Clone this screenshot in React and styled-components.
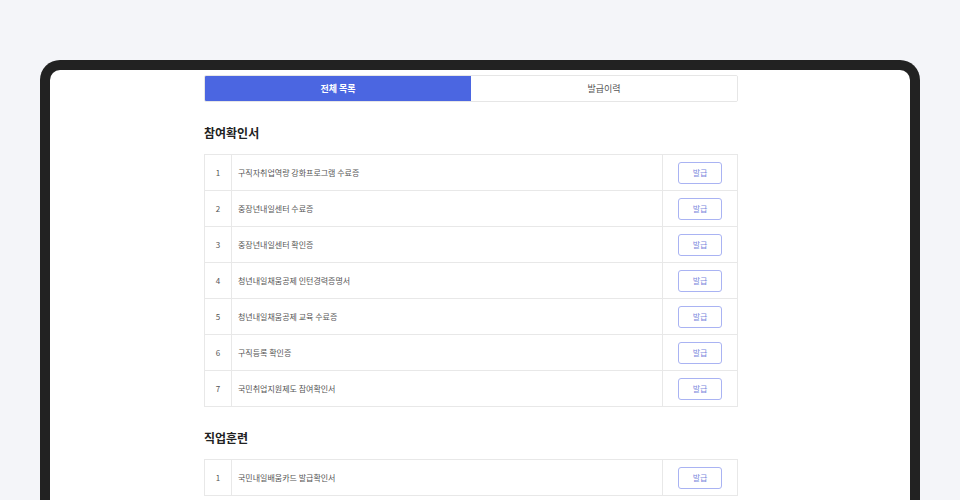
import React from 'react'
import styled, { createGlobalStyle } from 'styled-components'

const GlobalStyle = createGlobalStyle`
  html, body {
    margin: 0;
    padding: 0;
    background: #f4f5f9;
    font-family: "Noto Sans CJK KR", "Noto Sans", sans-serif;
    overflow: hidden;
  }
`

const Page = styled.div`
  width: 960px;
  height: 500px;
  padding: 60px 40px 0;
  box-sizing: border-box;
  overflow: hidden;
`

const Device = styled.div`
  height: 600px;
  border: 10px solid #222222;
  border-bottom: none;
  border-radius: 20px 20px 0 0;
  background: #ffffff;
  box-sizing: border-box;
  padding: 5px 0 0 154px;
`

const Content = styled.div`
  width: 534px;
`

const Tabs = styled.div`
  display: flex;
  height: 27px;
  border: 1px solid #e6e6e6;
  border-radius: 2px;
  box-sizing: border-box;
  overflow: hidden;
`

const Tab = styled.div`
  flex: 1;
  display: flex;
  align-items: center;
  justify-content: center;
  font-size: 9px;
  font-weight: ${p => (p.$active ? 700 : 400)};
  color: ${p => (p.$active ? '#ffffff' : '#555555')};
  background: ${p => (p.$active ? '#4b66e1' : '#ffffff')};
`

const Heading = styled.h3`
  margin: 23px 0 13px;
  font-size: 12px;
  line-height: 16px;
  font-weight: 700;
  color: #222222;
`

const Table = styled.div`
  border: 1px solid #e8e8e8;
  border-bottom: none;
`

const Row = styled.div`
  display: grid;
  grid-template-columns: 27px 1fr 74px;
  height: 36px;
  border-bottom: 1px solid #e8e8e8;
  box-sizing: border-box;
`

const Num = styled.div`
  display: flex;
  align-items: center;
  justify-content: center;
  border-right: 1px solid #e8e8e8;
  font-size: 8px;
  color: #555555;
`

const Name = styled.div`
  display: flex;
  align-items: center;
  padding-left: 6px;
  font-size: 8px;
  color: #555555;
  border-right: 1px solid #e8e8e8;
`

const Action = styled.div`
  display: flex;
  align-items: center;
  justify-content: center;
`

const IssueButton = styled.button`
  width: 44px;
  height: 22px;
  padding: 0;
  border: 1px solid #a9b3f3;
  border-radius: 3px;
  background: #ffffff;
  color: #7b88dd;
  font-family: inherit;
  font-size: 8px;
  cursor: pointer;
`

const participation = [
  '구직자취업역량 강화프로그램 수료증',
  '중장년내일센터 수료증',
  '중장년내일센터 확인증',
  '청년내일채움공제 인턴경력증명서',
  '청년내일채움공제 교육 수료증',
  '구직등록 확인증',
  '국민취업지원제도 참여확인서',
]

const training = ['국민내일배움카드 발급확인서']

const Section = ({ title, items }) => (
  <>
    <Heading>{title}</Heading>
    <Table>
      {items.map((item, i) => (
        <Row key={item}>
          <Num>{i + 1}</Num>
          <Name>{item}</Name>
          <Action>
            <IssueButton>발급</IssueButton>
          </Action>
        </Row>
      ))}
    </Table>
  </>
)

const App = () => (
  <Page>
    <GlobalStyle />
    <Device>
      <Content>
        <Tabs>
          <Tab $active>전체 목록</Tab>
          <Tab>발급이력</Tab>
        </Tabs>
        <Section title="참여확인서" items={participation} />
        <Section title="직업훈련" items={training} />
      </Content>
    </Device>
  </Page>
)

export default App
